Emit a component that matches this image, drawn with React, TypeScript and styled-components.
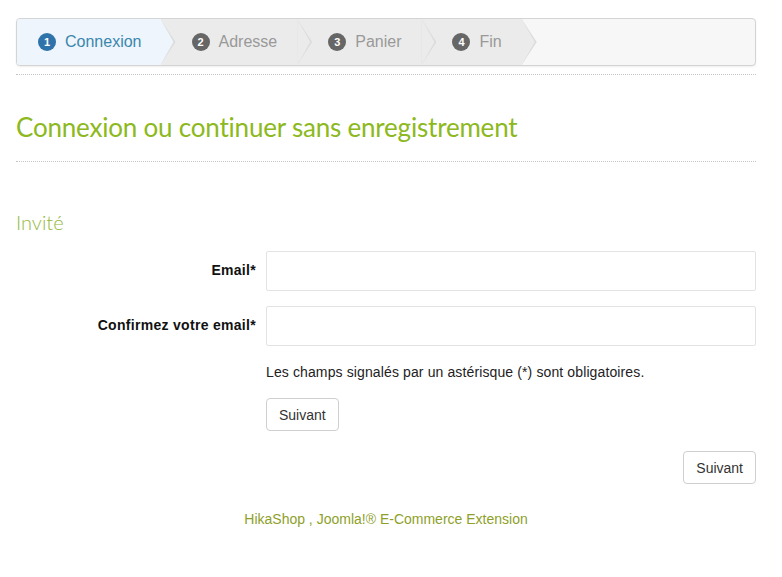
import React from "react";
import styled, { createGlobalStyle } from "styled-components";

const Global = createGlobalStyle`
  html, body { margin: 0; padding: 0; background: #fff; }
  body { font-family: "Liberation Sans", Arial, sans-serif; font-size: 14px; color: #333; }
  * { box-sizing: border-box; }
`;

const Page = styled.div`
  padding: 18px 26px 0 16px;
`;

const Wizard = styled.div`
  display: flex;
  height: 48px;
  border: 1px solid #d4d4d4;
  border-radius: 4px;
  background: #f7f7f7;
  box-shadow: 0 1px 2px rgba(0, 0, 0, 0.07);
  overflow: hidden;
`;

const Step = styled.div<{ $active?: boolean; $first?: boolean; $z: number }>`
  position: relative;
  z-index: ${(p) => p.$z};
  display: flex;
  align-items: center;
  gap: 9px;
  height: 100%;
  padding: 0 ${(p) => (p.$first ? "19px" : "20px")} 0 ${(p) => (p.$first ? "21px" : "31px")};
  background: ${(p) => (p.$active ? "#eef5fc" : "#ebebeb")};
  color: ${(p) => (p.$active ? "#3a87ad" : "#999")};
  font-size: 16px;
  white-space: nowrap;
  &::before,
  &::after {
    content: "";
    position: absolute;
    top: 0;
    height: 100%;
    clip-path: polygon(0 0, 100% 50%, 0 100%);
  }
  &::before {
    right: -15px;
    width: 15px;
    background: #dcdcdc;
  }
  &::after {
    right: -13px;
    width: 13px;
    background: ${(p) => (p.$active ? "#eef5fc" : "#ebebeb")};
  }
`;

const Badge = styled.span<{ $active?: boolean }>`
  display: inline-flex;
  align-items: center;
  justify-content: center;
  width: 18px;
  height: 18px;
  border-radius: 50%;
  background: ${(p) => (p.$active ? "#2f73ab" : "#666")};
  color: #fff;
  font-size: 11px;
  font-weight: bold;
`;

const Divider = styled.div<{ $top: number }>`
  margin-top: ${(p) => p.$top}px;
  border-top: 1px dotted #c4c4c4;
`;

const Title = styled.h1`
  margin: 37px 0 19px;
  font-family: Lato, "Open Sans", sans-serif;
  font-weight: 400;
  font-size: 26px;
  line-height: 30px;
  color: #8cb820;
  letter-spacing: -0.2px;
`;

const SubTitle = styled.h2`
  margin: 48px 0 17px;
  font-family: Lato, "Open Sans", sans-serif;
  font-weight: 300;
  font-size: 20px;
  line-height: 24px;
  color: #94b83c;
`;

const FormGrid = styled.div`
  display: grid;
  grid-template-columns: 240px 1fr;
  column-gap: 10px;
  row-gap: 15px;
  align-items: center;
`;

const Label = styled.label`
  text-align: right;
  font-weight: bold;
  font-size: 14px;
  letter-spacing: 0.3px;
  color: #111;
  transform: translateY(-1px);
`;

const Input = styled.input`
  height: 40px;
  width: 100%;
  border: 1px solid #e3e3e3;
  border-radius: 2px;
  background: #fff;
  outline: none;
`;

const Note = styled.p`
  margin: 16px 0 16px 250px;
  line-height: 20px;
  font-size: 14px;
  letter-spacing: 0.12px;
  color: #222;
`;

const Button = styled.button`
  height: 33px;
  padding: 0 12px;
  border: 1px solid #cfcfcf;
  border-radius: 4px;
  background: #fff;
  color: #333;
  font-family: "Liberation Sans", Arial, sans-serif;
  font-size: 14px;
`;

const LeftAction = styled.div`
  padding-left: 250px;
`;

const RightAction = styled.div`
  display: flex;
  justify-content: flex-end;
  margin-top: 20px;
`;

const Footer = styled.div`
  margin-top: 25px;
  text-align: center;
  line-height: 20px;
  font-size: 14px;
  color: #8e9f2a;
`;

const steps = ["Connexion", "Adresse", "Panier", "Fin"];

export default function App() {
  return (
    <>
      <Global />
      <Page>
        <Wizard>
          {steps.map((s, i) => (
            <Step key={s} $active={i === 0} $first={i === 0} $z={10 - i}>
              <Badge $active={i === 0}>{i + 1}</Badge>
              {s}
            </Step>
          ))}
        </Wizard>
        <Divider $top={8} />
        <Title>Connexion ou continuer sans enregistrement</Title>
        <Divider $top={0} />
        <SubTitle>Invité</SubTitle>
        <FormGrid>
          <Label>Email*</Label>
          <Input type="text" />
          <Label>Confirmez votre email*</Label>
          <Input type="text" />
        </FormGrid>
        <Note>Les champs signalés par un astérisque (*) sont obligatoires.</Note>
        <LeftAction>
          <Button>Suivant</Button>
        </LeftAction>
        <RightAction>
          <Button>Suivant</Button>
        </RightAction>
        <Footer>HikaShop , Joomla!® E-Commerce Extension</Footer>
      </Page>
    </>
  );
}
